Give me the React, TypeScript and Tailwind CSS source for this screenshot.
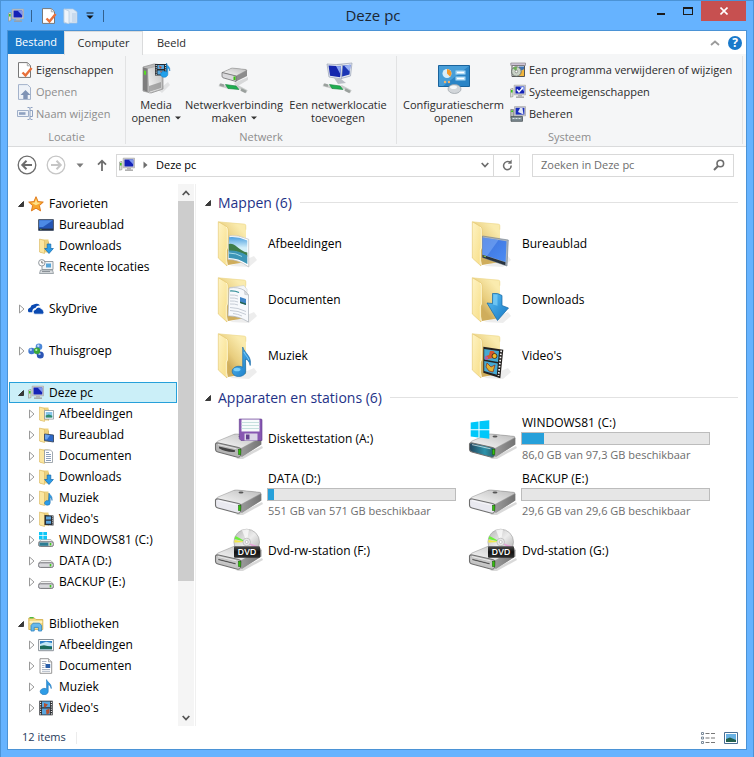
import type { ReactNode } from 'react';
import { clsx } from 'clsx';

/* ---------- 16px icons ---------- */

interface IconProps {
  name: string;
  className?: string;
}

const FolderBase = () => (
  <>
    <path d="M2 1.5h8.5v13H2z" fill="#ecd07c" />
    <path d="M10.5 3.5v11" stroke="#c9a54c" strokeWidth=".7" />
    <path d="M1.500 1l5 1.500v13l-5-1.500z" fill="#fbe6a0" stroke="#d9b65a" strokeWidth=".6" />
  </>
);

const Monitor = () => (
  <>
    <path d="M.5 5l2.500-.6v8.200l-2.500.6z" fill="#d9dcd6" stroke="#8b8f88" strokeWidth=".6" />
    <path d="M1 6h1.600v2.400H1z" fill="#3fc41e" />
    <path d="M4.200 1.200h11.400v9.600H4.200z" fill="#d5d5d5" stroke="#a5a5a5" strokeWidth=".7" />
    <path d="M5.500 2.500h8.800v7H5.500z" fill="#1423b8" />
    <path d="M9.500 2.500h4.800v5z" fill="#7f97ee" />
    <path d="M8 11h4v1.500H8z" fill="#b5b5b5" />
    <path d="M6 12.500h8v1.300H6z" fill="#9c9c9c" />
  </>
);

const SmallDrive = () => (
  <>
    <path d="M3.200 7.500h9.600l2.700 2.800H.5z" fill="#f0f0f0" stroke="#9c9c9c" strokeWidth=".7" />
    <rect x=".6" y="9.800" width="14.800" height="4.600" rx="1.600" fill="#d8d8dc" stroke="#77777c" />
    <path d="M11.700 11h1.600v2.400h-1.600z" fill="#3ecb1c" />
  </>
);

const smallIcons: Record<string, ReactNode> = {
  computer: <Monitor />,
  properties: (
    <>
      <path d="M1.500.6h9l3 3v11.800h-12z" fill="#fff" stroke="#777" />
      <path d="M10.300.8v3h3" fill="#eee" stroke="#999" strokeWidth=".8" />
      <path d="M5.500 10.500l3 3L14.600 6" fill="none" stroke="#e8703a" strokeWidth="2.400" />
    </>
  ),
  newFolder: (
    <>
      <path d="M1 1h9l4 3v11H1z" fill="#dce9f6" stroke="#b3c8de" strokeWidth=".7" />
      <path d="M1 1l5 2v13l-5-2z" fill="#eef4fb" stroke="#b3c8de" strokeWidth=".7" />
      <path d="M9 5h4v9H9z" fill="#c8daed" />
    </>
  ),
  open: (
    <>
      <path d="M1.500.6h9l3 3v11.800h-12z" fill="#eef2f8" stroke="#a3b2cb" />
      <path d="M8.500 6l5 5h-2.800v4H6.300v-4H3.500z" fill="#7f93b5" />
    </>
  ),
  rename: (
    <>
      <path d="M.5 4.500h11v6H.5z" fill="#eef2f8" stroke="#9fafc9" />
      <path d="M2 6.200h6.500v2.600H2z" fill="#8ea1c0" />
      <path d="M10.500 1.500h1.700l.8.8.8-.8h1.700M10.500 13.500h1.700l.8-.8.8.8h1.700M13 2v11M13 4.500h2.500v6H13" fill="none" stroke="#8ea1c0" />
    </>
  ),
  programs: (
    <>
      <path d="M2 3.500h12.500v11H2z" fill="#f5f5f5" stroke="#555" />
      <path d="M.8 1h14.700v2.400H.8z" fill="#d5c9dd" stroke="#777" strokeWidth=".6" />
      <path d="M9 4.500h5v4H9z" fill="#3f74b4" />
      <path d="M10 10l4-3v7H9z" fill="#f3b63c" />
      <circle cx="6.400" cy="9.500" r="4.800" fill="#c9d2c6" stroke="#58625a" strokeWidth=".8" />
      <path d="M6.400 9.500L3 6.200a4.700 4.700 0 014-1.300z" fill="#6cae57" />
      <circle cx="6.400" cy="9.500" r="1.300" fill="#fff" stroke="#555" strokeWidth=".5" />
    </>
  ),
  systemProps: (
    <>
      <Monitor />
      <path d="M7 5.500l2 2.400 4-4.500" fill="none" stroke="#fff" strokeWidth="1.500" />
    </>
  ),
  manage: (
    <>
      <path d="M4.500.6h11v9.200h-11z" fill="#d5d5d5" stroke="#999" strokeWidth=".6" />
      <path d="M5.600 1.800h8.800v6.800H5.600z" fill="#1a2fbd" />
      <path d="M8 6l2-4h2.500l1 6.600z" fill="#e2e7f5" />
      <path d="M.7 3.500h2.800v8H.7z" fill="#b9bdb8" stroke="#666" strokeWidth=".6" />
      <path d="M1.200 4.500h1.800v1.600H1.200z" fill="#3fc41e" />
      <path d="M1 10.500h11.500v4.800H1z" fill="#7d8b92" stroke="#4c555a" strokeWidth=".8" />
      <path d="M2.500 12.500h8.500" stroke="#dce3e6" strokeWidth="1" strokeDasharray="2 1" />
    </>
  ),
  star: (
    <>
      <path d="M8 .7l2.100 4.900 5.200.5-3.900 3.500 1.200 5.300L8 12.200l-4.600 2.700 1.200-5.300L.7 6.100l5.200-.5z" fill="#f7a52c" stroke="#dc7414" strokeWidth=".9" />
      <path d="M8 2.800l1.300 3.600 3.600.4-5 2.400-4.500-2.500 3.400-.3z" fill="#ffe28a" />
    </>
  ),
  desktop: (
    <>
      <path d="M.6 2.600h14.800v10.800H.6z" fill="#2456b5" stroke="#4b5566" />
      <path d="M1.200 3.200h13.600L5 10H1.200z" fill="#4c8ae4" />
      <path d="M1 11.600h14V13H1z" fill="#27313f" />
      <path d="M2 12h1.600v.6H2z" fill="#8ed24a" />
    </>
  ),
  downloads: (
    <>
      <FolderBase />
      <path d="M9.200 6h3.600v4.500h2.600L11 15.500l-4.400-5h2.600z" fill="#2c9ce8" stroke="#1268ac" strokeWidth=".7" />
    </>
  ),
  recent: (
    <>
      <path d="M4 2.500h11v8H4z" fill="#f1f3f5" stroke="#8c949b" strokeWidth=".9" />
      <path d="M8 4.500h5v4H8z" fill="#58a5d8" />
      <path d="M2.500 11h12l1 3.500H1.500z" fill="#d9dcdf" stroke="#8c949b" strokeWidth=".8" />
      <path d="M4 12.600h8" stroke="#6d757c" strokeWidth=".8" />
      <circle cx="3.800" cy="3.800" r="3.200" fill="#fbfbfb" stroke="#868d94" strokeWidth=".9" />
      <path d="M3.800 2v2h1.600" fill="none" stroke="#444" strokeWidth=".7" />
    </>
  ),
  skydrive: (
    <>
      <path d="M.8 11.300A2.900 2.900 0 012.400 6.400 3.600 3.600 0 015.800 3.600 4.200 4.200 0 0112 4.600C9.500 4.200 8 5.500 7.500 7c-2.300.2-3.600 2-3 4.300z" fill="#0a4ab2" />
      <path d="M6.800 13.200a2.500 2.500 0 01.8-4.800 3.100 3.100 0 015.600-.7 2.400 2.400 0 012.200 2.600c.5.4.7 1 .5 1.700a1.700 1.700 0 01-1.600 1.200z" fill="#0a4ab2" stroke="#fff" strokeWidth=".8" />
    </>
  ),
  homegroup: (
    <>
      <path d="M4 8l7-4v8z" fill="none" stroke="#9fb8d8" strokeWidth="1.600" />
      <circle cx="3.600" cy="8" r="3.300" fill="#3f78cf" />
      <circle cx="2.800" cy="6.800" r="1.200" fill="#b5d2f5" />
      <circle cx="11" cy="3.800" r="3.300" fill="#4c88d8" />
      <circle cx="10.300" cy="2.800" r="1.200" fill="#c5dcf8" />
      <circle cx="12.300" cy="12" r="3.500" fill="#2b55b5" />
      <circle cx="11.500" cy="10.900" r="1.200" fill="#a5c0ee" />
      <circle cx="9" cy="7.800" r="3.200" fill="#3aa83a" />
      <circle cx="8.300" cy="6.900" r="1.100" fill="#c0eeb5" />
    </>
  ),
  folderPictures: (
    <>
      <FolderBase />
      <path d="M6.500 4.500h9v8.600h-9z" fill="#fff" stroke="#8b949c" strokeWidth=".8" />
      <path d="M7.700 6h6.600v5.600H7.700z" fill="#86c5ea" />
      <path d="M7.700 9.400l3-1 3.600 1.400v1.800H7.700z" fill="#2f8a6a" />
    </>
  ),
  folderDesktop: (
    <>
      <FolderBase />
      <path d="M6.500 7l9 1v7l-9-1.400z" fill="#2c68c8" stroke="#394a63" strokeWidth=".9" />
      <path d="M7 7.600l5 .6-3 4.400-2-.3z" fill="#68a2ee" />
    </>
  ),
  folderDocuments: (
    <>
      <FolderBase />
      <path d="M6.500 2h6l2 2v10.500h-8z" fill="#fff" stroke="#8b949c" strokeWidth=".8" />
      <path d="M8 4.500h3M8 6.500h5M8 8.500h5M8 10.500h5M8 12.500h5" stroke="#6f87a8" strokeWidth=".8" />
    </>
  ),
  folderMusic: (
    <>
      <FolderBase />
      <path d="M11 3c.5 2 3.800 2.500 3 7.500-.2-2-1-3-1.800-3.200V13a2.800 2.300 0 11-1.700-2.200z" fill="#2c9ce8" stroke="#1268ac" strokeWidth=".5" />
    </>
  ),
  folderVideos: (
    <>
      <FolderBase />
      <path d="M6.500 4l9 .5v10l-9-.5z" fill="#2a2f36" />
      <path d="M8 5.500h5v3H8zM8 9.800h5v3H8z" fill="#5ba4dc" />
      <path d="M14.500 5.300v8.400" stroke="#e4e4e4" strokeWidth=".9" strokeDasharray="1 1" />
    </>
  ),
  driveWindows: (
    <>
      <SmallDrive />
      <path d="M1.400 10.600h9v3.200h-9z" fill="#2c7d93" />
      <path d="M1 0h3.600v3.300H1zM5.300 0H9v3.300H5.300zM1 4h3.600v3.600H1zM5.300 4H9v3.600H5.300z" fill="#0cc6f7" />
    </>
  ),
  drive: <SmallDrive />,
  libraries: (
    <>
      <path d="M.8 2h5.600l1.400 1.500h7v10H.8z" fill="#f6dc84" stroke="#d0a944" strokeWidth=".8" />
      <path d="M1.600 1h4v1.400h-4z" fill="#4dba3f" />
      <path d="M1.600 5h12.600v2H1.600z" fill="#fdf0bd" />
      <path d="M3 15V9.500L5 7.200h6.500L13.600 9.500V15h-3.200v-3.600H6.200V15z" fill="#67b9ec" stroke="#2e84c0" strokeWidth=".8" />
    </>
  ),
  pictures: (
    <>
      <path d="M.6 2.500h14.800v11.200H.6z" fill="#fff" stroke="#7d868d" strokeWidth=".9" />
      <path d="M2 4h12v8.300H2z" fill="#2c7fc6" />
      <path d="M2 7l6-2.300 6 1.300v3L2 9.500z" fill="#c2e7f5" />
      <path d="M2 9l4-.8 8 1.800v2.300H2z" fill="#1b6b58" />
    </>
  ),
  documents: (
    <>
      <path d="M2 .7h8.500l3.200 3.200v11.400H2z" fill="#fff" stroke="#8b8b8b" strokeWidth=".9" />
      <path d="M10.500.7v3.200h3.200" fill="#e5e5e5" stroke="#8b8b8b" strokeWidth=".7" />
      <path d="M4 3.500h4.500M4 5.500h4M4 7.500h2.500M4 9.500h2.500M4 11.500h8M4 13.300h8" stroke="#97a3b5" strokeWidth=".8" />
      <path d="M7.500 6h4.700v4H7.500z" fill="#2a5ea9" />
    </>
  ),
  music: (
    <path d="M8.600.6c.6 3 5.200 3.500 4.600 9-.5-2.600-1.600-3.600-3-4v7a4 3.200 0 11-1.600-2.600z" fill="#2e9ce6" stroke="#1b72b8" strokeWidth=".6" />
  ),
  videos: (
    <>
      <path d="M1.300.7h13.400v14.600H1.300z" fill="#2c2f33" />
      <path d="M4 1.600h8v5.600H4zM4 8.600h8v5.800H4z" fill="#5aa7df" />
      <path d="M6 3l4 1.400-2.500 2.800H6zM8 10l3.500-1.400v4.600l-3 1.200z" fill="#b5502f" />
      <path d="M2.600 1.800v12.600M13.400 1.800v12.600" stroke="#eee" strokeWidth="1.100" strokeDasharray="1.100 1.200" />
    </>
  ),
};

const Icon = ({ name, className }: IconProps) => (
  <svg viewBox="0 0 16 16" className={clsx('size-4 shrink-0', className)} aria-hidden="true">
    {smallIcons[name]}
  </svg>
);

/* ---------- 48px icons ---------- */

const LargeFolder = () => (
  <>
    <path d="M14 46l24-10 3 4-8 7z" fill="#000" opacity=".07" />
    <path d="M2.300 1.700L28.500 4q1.500 0 1.500 1.500V42l-18 3z" fill="url(#folderBack)" />
    <path d="M3 1.900L28.500 4.200q1.300.2 1.300 1.500v4" fill="none" stroke="#eeda92" strokeWidth=".7" />
    <path d="M2.300 1.700L10.500 6.500Q12 7.500 12 9.500V28l-1 2v16L2.300 38z" fill="url(#folderFlap)" stroke="#e3c469" strokeWidth=".6" />
    <path d="M10 7q1.300 1 1.300 2.800V28l-1 2v14.500" fill="none" stroke="#fffadf" strokeWidth=".8" />
  </>
);

const LargeDrive = ({ front = '#e9e9f0' }: { front?: string }) => (
  <>
    <path d="M20 44l26-13 1 2-20 11z" fill="#000" opacity=".15" />
    <path d="M17.500 19.500Q19 18.800 21 19l22.500 2.300q2 .3 2 2v6.200L25.500 42z" fill="#9a9a9a" />
    <path d="M0 28.500Q0 27 2 26l15.500-6.500q1.500-.6 3.500-.5l22.500 2.300q2 .4 1 1.500L26 33q-1.500.8-3.500.5z" fill="url(#driveTop)" stroke="#8f8f8f" strokeWidth=".5" />
    <path d="M26 33.500l19-10.500v6.500L25.500 42z" fill="url(#driveSide)" />
    <path d="M-.5 29q.5-1.500 3-1l20 4.500q2.500.5 2.500 2.500l-.5 5.500q-.5 2.200-3 1.700L2 37Q-.5 36.500-.5 34z" fill={front} stroke="#6f6f6f" strokeWidth="1.100" />
    <path d="M2 29.600l18.500 4.200" stroke="#fff" strokeWidth=".8" opacity=".8" />
    <rect x="22.400" y="34.200" width="2.400" height="5.400" fill="#35c20d" stroke="#195c0a" strokeWidth=".5" />
    <ellipse cx="25" cy="21.500" rx="2.500" ry=".9" fill="#555" />
  </>
);

const DvdDrive = () => (
  <>
    <LargeDrive front="#c4c4c4" />
    <path d="M2 31.500l18 4.500v1.800L2 33.300z" fill="#444" stroke="#eee" strokeWidth=".5" />
    <circle cx="30.700" cy="15" r="12.800" fill="url(#disc)" stroke="#9d9d9d" strokeWidth=".6" />
    <path d="M30.700 15L18.500 12l1-3z" fill="#6df03a" />
    <path d="M30.700 15L18.300 15.500l.2-2.500z" fill="#f2ea47" />
    <path d="M30.700 15l11.500 4.500-2 3z" fill="#e995d8" opacity=".8" />
    <path d="M30.700 15L26 3.200a12.500 12.500 0 017-.7z" fill="#fff" opacity=".7" />
    <circle cx="30.700" cy="15" r="3.800" fill="#e8e8e8" stroke="#aaa" strokeWidth=".6" />
    <circle cx="30.700" cy="15" r="1.500" fill="#fff" stroke="#999" strokeWidth=".5" />
    <rect x="18" y="19.300" width="26" height="11.400" rx="1" fill="url(#dvdLabel)" />
    <text x="31" y="28.300" textAnchor="middle" fontSize="9" fill="#fff" fontFamily="Open Sans" fontWeight="600">DVD</text>
  </>
);

const largeIcons: Record<string, ReactNode> = {
  pictures: (
    <>
      <LargeFolder />
      <path d="M13.300 15.700q9-1 19.400 3.600V47Q22 39 12 39.500z" fill="#fff" stroke="#b8bcc0" strokeWidth=".7" />
      <path d="M13 17.200q9-.8 18.300 3.300V44Q22 37.500 12.500 37.700z" fill="url(#sky)" />
      <path d="M12.800 24q3.500-1 6.500 1.500t6 4.500 6 2.500v4q-9-6-18.500-5.500z" fill="#3f7d49" />
      <path d="M12.800 30.500q9-.5 18.500 5V44q-9-6-18.500-6z" fill="#3c95b6" />
      <path d="M13 33q7 0 13 3.500" fill="none" stroke="#a5d9e8" strokeWidth="1" />
    </>
  ),
  documents: (
    <>
      <LargeFolder />
      <path d="M14 11.500l14-2 3 4v28l-18-4z" fill="#f4f6f8" stroke="#c0c4c8" strokeWidth=".5" />
      <path d="M13 12q9-1.500 15.500 2.500l4 4.500V46Q22 39.500 12 40z" fill="#f7f9fc" stroke="#abb0b7" strokeWidth=".7" />
      <path d="M28.500 14.500l.3 4 3.700.5z" fill="#d9dde2" stroke="#abb0b7" strokeWidth=".4" />
      <path d="M14 15q5-.3 9 1.500" fill="none" stroke="#2e8c96" strokeWidth="1.200" />
      <path d="M14 19q5-.3 8 1M14 22q5-.3 8 1M14 25q5-.3 8 1M14 28q5-.3 8 1M14 31.500q8 0 16 4M14 34.500q8 0 16 4M17 37.500q5 .5 9 2.500" fill="none" stroke="#c0c6d0" strokeWidth=".9" />
      <path d="M24 21l6 2v6l-6-2z" fill="#3f84c6" />
      <path d="M24 25.500l6 2V29l-6-2z" fill="#26654f" />
    </>
  ),
  music: (
    <>
      <LargeFolder />
      <path d="M26.700 15c1.500 6 9.500 9 7.500 18.500-.8-4-2.600-6-4.700-6.500l.2 12c.4 3.500-3.700 5.500-7.200 5.500s-6.500-2.500-6.300-5.500 4-5 7-4.700 2.800.8 3.500 1z" fill="url(#blueNote)" stroke="#1c6eaa" strokeWidth=".7" />
      <ellipse cx="21" cy="37.500" rx="3.500" ry="1.800" fill="#7fd1fa" />
      <path d="M28 20c1 3 4 5 4.800 8" fill="none" stroke="#8bd5fb" strokeWidth=".8" />
    </>
  ),
  desktop: (
    <>
      <LargeFolder />
      <path d="M12.500 16l25.800 4L37 46l-24.500-8.500z" fill="#aab4bf" stroke="#6f7a86" strokeWidth=".6" />
      <path d="M12.500 17.500L36.500 21.300 35.600 42 12.500 34.500z" fill="url(#screen)" />
      <path d="M12.500 17.500l16 2.500L17 36l-4.500-1.500z" fill="#8bb8fa" opacity=".45" />
      <path d="M12.500 34.800l23 7.400-.2 3L12.500 37.500z" fill="#28333f" />
      <path d="M13.500 36l2.500.8" stroke="#8fd34a" strokeWidth="1" />
    </>
  ),
  downloads: (
    <>
      <LargeFolder />
      <path d="M22.500 17.500q5-1 9.500 2v10l6.500 2.500-11 12.500L17 27l5.500.5z" fill="url(#blueNote)" stroke="#1667a3" strokeWidth=".7" />
      <path d="M23.500 18.500q2-.3 4 .2v11L23 28.500z" fill="#7fd1fa" opacity=".7" />
    </>
  ),
  videos: (
    <>
      <LargeFolder />
      <path d="M13.300 14.700l20 3-3 28.500-17-5.500z" fill="#24211f" />
      <path d="M14.200 17l14.800 2-1 11-13.800-2.500zM14.200 29l13.600 2.500-1 11.200L14.200 39z" fill="#45a9d3" />
      <path d="M20 19q4-1 5 2t-2 5l-5 1-2-3 3-1z" fill="#d7572e" />
      <circle cx="24.500" cy="24" r="2.500" fill="#f2ba26" stroke="#30231d" strokeWidth=".8" />
      <path d="M15 24l3 1v3l-3-.5z" fill="#b35ba5" />
      <path d="M17 31l4 4 4-2-2 7-4-1-3-4z" fill="#e0b332" stroke="#8b3a25" strokeWidth=".8" />
      <path d="M31.200 18.500L28.500 44" stroke="#f5f5f5" strokeWidth="1.700" strokeDasharray="1.600 1.500" />
    </>
  ),
  floppy: (
    <>
      <LargeDrive front="#b5b5b5" />
      <path d="M3 31.500l16 3.800v1.500q-8 1-16-3.600z" fill="#444" />
      <path d="M23.300 4H45q1 0 1 1v20.500H25l-1.700-1.700z" fill="#8757b2" stroke="#60378b" strokeWidth=".6" />
      <path d="M25.500 4.500h18v12h-18z" fill="#f7fbfb" />
      <path d="M25.500 7.500h18M25.500 10.500h18M25.500 13.500h18" stroke="#b9d9d7" strokeWidth=".8" />
      <path d="M28.500 18.500h13v7h-13z" fill="#dcd7e8" />
      <path d="M30 19.500h3.500v5H30z" fill="#62408e" />
    </>
  ),
  windows: (
    <>
      <LargeDrive front="url(#teal)" />
      <path d="M.7 7.500l7.800-1v7.700H.7zM9.500 6.300l9.800-1.100v9H9.500zM.7 15.200h7.800v7.200l-7.800-1zM9.500 15.200h9.800v8.500l-9.800-1.200z" fill="#00c8fa" />
    </>
  ),
  drive: <LargeDrive />,
  dvd: <DvdDrive />,
};

// Gradients shared by all of the large icons
const IconDefs = () => (
  <svg className="absolute size-0" aria-hidden="true">
    <defs>
      <linearGradient id="folderBack" gradientUnits="userSpaceOnUse" x1="10" y1="30" x2="29" y2="14">
        <stop offset="0" stopColor="#cfad5c" />
        <stop offset=".35" stopColor="#e8cd7e" />
        <stop offset="1" stopColor="#faebae" />
      </linearGradient>
      <linearGradient id="folderFlap" x1="0" y1="0" x2="1" y2="1">
        <stop offset="0" stopColor="#fef3c4" />
        <stop offset="1" stopColor="#f7dd84" />
      </linearGradient>
      <linearGradient id="sky" x1="0" y1="0" x2="0" y2="1">
        <stop offset="0" stopColor="#4c9fdf" />
        <stop offset=".4" stopColor="#d3effa" />
        <stop offset="1" stopColor="#d3effa" />
      </linearGradient>
      <linearGradient id="driveTop" x1="0" y1="1" x2="1" y2="0">
        <stop offset="0" stopColor="#fafafa" />
        <stop offset="1" stopColor="#bdbdbd" />
      </linearGradient>
      <linearGradient id="driveSide" x1="0" y1="0" x2="1" y2="0">
        <stop offset="0" stopColor="#9a9a9a" />
        <stop offset="1" stopColor="#747474" />
      </linearGradient>
      <linearGradient id="teal" x1="0" y1="0" x2="1" y2="0">
        <stop offset="0" stopColor="#23445c" />
        <stop offset=".6" stopColor="#2c93ab" />
        <stop offset="1" stopColor="#2b5a63" />
      </linearGradient>
      <linearGradient id="blueNote" x1="0" y1="0" x2="1" y2="1">
        <stop offset="0" stopColor="#5cc0f5" />
        <stop offset="1" stopColor="#1577c4" />
      </linearGradient>
      <linearGradient id="screen" x1="0" y1="0" x2="1" y2="1">
        <stop offset="0" stopColor="#3c70d8" />
        <stop offset="1" stopColor="#4c8df5" />
      </linearGradient>
      <linearGradient id="disc" x1="0" y1="0" x2="1" y2="1">
        <stop offset="0" stopColor="#b5b5b5" />
        <stop offset=".5" stopColor="#ececec" />
        <stop offset="1" stopColor="#a5a5a5" />
      </linearGradient>
      <linearGradient id="dvdLabel" x1="0" y1="0" x2="0" y2="1">
        <stop offset="0" stopColor="#4a4a4a" />
        <stop offset=".5" stopColor="#111" />
        <stop offset="1" stopColor="#2e2e2e" />
      </linearGradient>
    </defs>
  </svg>
);

const LargeIcon = ({ name }: { name: string }) => (
  <svg viewBox="0 0 48 48" className="size-12 shrink-0 overflow-visible" aria-hidden="true">
    {largeIcons[name]}
  </svg>
);

/* ---------- 32px ribbon icons ---------- */

const NetworkCable = () => (
  <>
    <path d="M1 23l9 2.500 10-1 9 5" fill="none" stroke="#c9cccb" strokeWidth="2.600" />
    <path d="M2 22.500l4 1.200M23 27.500l5 2.500" stroke="#9aa09d" strokeWidth="2.600" />
    <path d="M7.500 22.500L18 24l3 3.500-11-1z" fill="#1fae50" stroke="#12813a" strokeWidth=".6" />
  </>
);

const ribbonIcons: Record<string, ReactNode> = {
  media: (
    <>
      <path d="M18 28l10-8 2 3-8 8z" fill="#000" opacity=".08" />
      <path d="M3 5l11-3 9 1v24l-12 4-8-2z" fill="#b9b9b9" stroke="#8d8d8d" strokeWidth=".7" />
      <path d="M7.500 6.500L22 3v24l-13 4z" fill="url(#driveTop)" stroke="#999" strokeWidth=".5" />
      <path d="M3 5.500l4.500 1V30L3 28z" fill="#7d7d7d" />
      <path d="M9 24l12-4v6L9 30z" fill="#8b8b8b" opacity=".7" />
      <path d="M4 8.500l2 .5v4l-2-.5z" fill="#58d626" />
      <path d="M15 2h12v11.500H15z" fill="#24292e" />
      <path d="M17.500 3h6.500v4h-6.500zM17.500 8.500h6.500v4h-6.500z" fill="#55a7de" />
      <path d="M19 3.500l3 1.500-2 2zM20 9l3 1-1 2.500z" fill="#c1502f" />
      <path d="M16.200 3v10M25.700 3v10" stroke="#fff" strokeDasharray="1 1.200" />
      <path d="M26.500 1c.5 3 4 3.500 3.300 8-.5-2-1-2.800-2-3v6.500a3.600 3 0 11-1.300-2.500z" fill="#21a1ec" stroke="#1577bb" strokeWidth=".5" />
    </>
  ),
  networkDrive: (
    <>
      <path d="M16 21l14-6v3l-12 7z" fill="#000" opacity=".12" />
      <path d="M4 10.500L14 6l14 1.500q2 .5 1 1.500v5L18 19.500 5 15.500q-1-.6-1-2z" fill="#8c8c8c" />
      <path d="M4 10.500L14 6l14 1.500q1 .3 0 1.200L18 14z" fill="url(#driveTop)" stroke="#8f8f8f" strokeWidth=".5" />
      <path d="M4 10.500L18 14v5.500L5 15.800q-1-.6-1-1.800z" fill="#d9d9dc" stroke="#666" strokeWidth=".7" />
      <path d="M15.500 14.500h2v3.500h-2z" fill="#35c20d" />
      <NetworkCable />
    </>
  ),
  networkLocation: (
    <>
      <path d="M15 2.500l15-1.500-1.500 13-11 3z" fill="#e4e8f0" stroke="#97a0b4" strokeWidth=".7" />
      <path d="M17 4l11.500-1.300L27.500 12.500l-9 2.500z" fill="#1b36b5" />
      <path d="M22 3.500l6.500-.8-.8 7z" fill="#9ab1f2" />
      <path d="M5 2l15.500 1-1 14L7 15z" fill="#e4e8f0" stroke="#97a0b4" strokeWidth=".7" />
      <path d="M6.500 3.500l12.500.8-.8 11L8 13.700z" fill="#1426ad" />
      <path d="M14 4l5 .3-.6 8z" fill="#8ba4f2" />
      <path d="M12 16l7 1 5 4-8 1z" fill="#b9bdc5" />
      <NetworkCable />
    </>
  ),
  config: (
    <>
      <path d="M.5 3.500h31v21H.5z" fill="#2a84c6" stroke="#1a639c" />
      <path d="M1 4h30L5 24H1z" fill="#55a9e0" opacity=".7" />
      <circle cx="9" cy="11.500" r="4.500" fill="#d9edf9" />
      <path d="M9 11.500V7a4.500 4.500 0 013.200 7.700z" fill="#f59a2d" />
      <path d="M17.500 8.500h10v4h-10zM17.500 14.500h10v4h-10z" fill="#a7d7f3" />
      <path d="M19 10.500h7M19 16.500h7" stroke="#fff" strokeWidth="1.500" />
      <circle cx="7" cy="20" r="1.200" fill="#f5b56a" />
      <circle cx="11" cy="20" r="1.200" fill="#f5b56a" />
      <ellipse cx="16.500" cy="27" rx="6.500" ry="4.500" fill="#d2d6da" stroke="#9aa0a6" strokeWidth=".7" />
      <ellipse cx="15.500" cy="25.200" rx="3.500" ry="1.800" fill="#f5f7f8" />
    </>
  ),
};

/* ---------- Ribbon ---------- */

const Caret = () => (
  <svg viewBox="0 0 6 4" className="inline-block w-1.5 h-1 ml-1 mb-0.5" aria-hidden="true">
    <path d="M0 .5h6l-3 3z" fill="#333" />
  </svg>
);

interface BigButtonProps {
  icon: string;
  lines: [string, string];
  menu?: boolean;
}

const BigButton = ({ icon, lines, menu }: BigButtonProps) => (
  <button className="flex flex-col items-center text-[#2b2b2b] leading-[13px] whitespace-nowrap">
    <svg viewBox="0 0 32 32" className="size-8 mb-1" aria-hidden="true">
      {ribbonIcons[icon]}
    </svg>
    <span>{lines[0]}</span>
    <span>
      {lines[1]}
      {menu && <Caret />}
    </span>
  </button>
);

interface SmallButtonProps {
  icon: string;
  label: string;
  disabled?: boolean;
}

const SmallButton = ({ icon, label, disabled }: SmallButtonProps) => (
  <button
    disabled={disabled}
    className={clsx('flex items-center gap-[3px] h-[22px] whitespace-nowrap', disabled ? 'text-[#8d8d8d]' : 'text-[#2b2b2b]')}
  >
    <Icon name={icon} />
    {label}
  </button>
);

interface GroupProps {
  label: string;
  className?: string;
  children: ReactNode;
}

const RibbonGroup = ({ label, className, children }: GroupProps) => (
  <section className={clsx('flex flex-col justify-between border-r border-[#e2e3e4] my-0.5', className)}>
    <div className="flex">{children}</div>
    <div className="text-center text-[#8d8d8d] leading-[14px]">{label}</div>
  </section>
);

const Ribbon = () => (
  <div className="flex h-[93px] bg-[#f5f6f7] border-b border-[#dadbdc] text-[11px]">
    <RibbonGroup label="Locatie" className="w-[118px] shrink-0">
      <div className="pt-[3px] pl-[9px]">
        <SmallButton icon="properties" label="Eigenschappen" />
        <SmallButton icon="open" label="Openen" disabled />
        <SmallButton icon="rename" label="Naam wijzigen" disabled />
      </div>
    </RibbonGroup>
    <RibbonGroup label="Netwerk" className="w-[271px] shrink-0">
      <div className="grid grid-cols-[60px_96px_112px] pt-1.5">
        <BigButton icon="media" lines={['Media', 'openen']} menu />
        <BigButton icon="networkDrive" lines={['Netwerkverbinding', 'maken']} menu />
        <BigButton icon="networkLocation" lines={['Een netwerklocatie', 'toevoegen']} />
      </div>
    </RibbonGroup>
    <RibbonGroup label="Systeem" className="grow mr-[3px]">
      <div className="w-[113px] shrink-0 flex justify-center pt-1.5">
        <BigButton icon="config" lines={['Configuratiescherm', 'openen']} />
      </div>
      <div className="pt-[3px]">
        <SmallButton icon="programs" label="Een programma verwijderen of wijzigen" />
        <SmallButton icon="systemProps" label="Systeemeigenschappen" />
        <SmallButton icon="manage" label="Beheren" />
      </div>
    </RibbonGroup>
  </div>
);

/* ---------- Window chrome ---------- */

const TitleBar = () => (
  <header className="relative flex justify-between h-[29px] px-px">
    <div className="flex items-center">
      <Icon name="computer" />
      <span className="w-px h-3 ml-[7px] bg-[#33618f]" />
      <button className="ml-[9px]" aria-label="Eigenschappen">
        <Icon name="properties" className="block" />
      </button>
      <button className="ml-1.5" aria-label="Nieuwe map">
        <Icon name="newFolder" className="block" />
      </button>
      <button className="ml-[7px]" aria-label="Werkbalk Snelle toegang aanpassen">
        <svg viewBox="0 0 8 8" className="block size-2" aria-hidden="true">
          <path d="M.5 1h7" stroke="#111" />
          <path d="M.5 3.500h7L4 7z" fill="#111" />
        </svg>
      </button>
      <span className="w-px h-3 ml-[9px] bg-[#33618f]" />
    </div>
    <h1 className="absolute inset-x-0 top-0.5 mx-auto w-16 -translate-x-1 text-center text-[15px] leading-6 text-[#1c2733]">Deze pc</h1>
    <div className="flex items-start">
      <button className="w-7 h-5 flex items-center justify-center" aria-label="Minimaliseren">
        <svg viewBox="0 0 10 10" className="size-2.5">
          <path d="M1 8h8" stroke="#1b1b1b" strokeWidth="2" />
        </svg>
      </button>
      <button className="w-[26px] h-5 flex items-center justify-center" aria-label="Maximaliseren">
        <svg viewBox="0 0 10 8" className="w-2.5 h-2">
          <path d="M0 0h10v8H0zM1 2v5h8V2z" fill="#1b1b1b" fillRule="evenodd" />
        </svg>
      </button>
      <button className="w-[45px] h-5 flex items-center justify-center bg-[#c75050]" aria-label="Sluiten">
        <svg viewBox="0 0 8 8" className="size-2">
          <path d="M.5.5l7 7M7.500.5l-7 7" stroke="#fff" strokeWidth="1.600" />
        </svg>
      </button>
    </div>
  </header>
);

const Tabs = () => (
  <nav className="flex h-6 -mb-px items-stretch text-[11px]">
    <button className="w-14 h-[23px] bg-[#1979ca] text-white">Bestand</button>
    <button className="w-[79px] relative bg-[#f5f6f7] border border-b-0 border-[#dadbdc] text-[#2b2b2b]">Computer</button>
    <button className="w-[57px] text-[#2b2b2b]">Beeld</button>
    <div className="flex items-center gap-2 ml-auto pr-1">
      <button aria-label="Lint minimaliseren">
        <svg viewBox="0 0 10 6" className="block w-2.5 h-1.5">
          <path d="M1 5l4-3.500L9 5" fill="none" stroke="#9b9b9b" strokeWidth="1.800" />
        </svg>
      </button>
      <button className="size-3.5 rounded-full bg-[#1979ca] text-white text-xs font-bold leading-[14px]" aria-label="Help">
        ?
      </button>
    </div>
  </nav>
);

const Arrow = ({ color }: { color: string }) => (
  <svg viewBox="0 0 20 20" className="block size-5">
    <circle cx="10" cy="10" r="8.800" fill="none" stroke={color} strokeWidth="1.300" />
    <path d="M5.500 10h9.500M9.500 5.800L5.300 10l4.200 4.200" fill="none" stroke={color} strokeWidth="2" />
  </svg>
);

const AddressBar = () => (
  <div className="flex items-center h-9 mb-px pl-[9px] pr-3">
    <button aria-label="Vorige">
      <Arrow color="#6d6d6d" />
    </button>
    <button disabled className="ml-[9px] rotate-180" aria-label="Volgende">
      <Arrow color="#c6c6c6" />
    </button>
    <button className="ml-2.5" aria-label="Recente locaties">
      <svg viewBox="0 0 8 5" className="block w-2 h-[5px]">
        <path d="M.5.5h7L4 4.500z" fill="#7a7a7a" />
      </svg>
    </button>
    <button className="ml-3" aria-label="Omhoog">
      <svg viewBox="0 0 12 12" className="block size-3">
        <path d="M6 12V2M2 5.700L6 1.700l4 4" fill="none" stroke="#6d6d6d" strokeWidth="1.800" />
      </svg>
    </button>
    <div className="flex items-stretch grow h-[23px] ml-2 border border-[#d9d9d9] text-[11px]">
      <button className="flex items-center pl-0.5">
        <Icon name="computer" />
        <svg viewBox="0 0 5 8" className="w-[5px] h-2 ml-2 mr-2">
          <path d="M.5.5L4.500 4l-4 3.500z" fill="#6d6d6d" />
        </svg>
        Deze pc
      </button>
      <button className="ml-auto w-[17px] flex items-center justify-center" aria-label="Vorige locaties">
        <svg viewBox="0 0 8 6" className="w-2 h-1.5">
          <path d="M.7 1L4 4.500 7.300 1" fill="none" stroke="#6d6d6d" strokeWidth="1.700" />
        </svg>
      </button>
      <button className="w-[26px] border-l border-[#d9d9d9] flex items-center justify-center" aria-label="Vernieuwen">
        <svg viewBox="0 0 12 12" className="size-3">
          <path d="M9.300 3.300A4.200 4.200 0 106 10.800a4.300 4.300 0 004.200-4.300" fill="none" stroke="#6d6d6d" strokeWidth="1.500" />
          <path d="M6.800 4.700h3.900V.6z" fill="#6d6d6d" />
        </svg>
      </button>
    </div>
    <label className="flex items-center w-[202px] h-[23px] ml-3 pl-2 pr-2 border border-[#d9d9d9] text-[11px]">
      <span className="sr-only">Zoeken</span>
      <input type="text" placeholder="Zoeken in Deze pc" className="grow min-w-0 outline-none placeholder:text-[#6d6d6d]" />
      <svg viewBox="0 0 12 12" className="size-3" aria-hidden="true">
        <circle cx="7.300" cy="4.500" r="3.300" fill="none" stroke="#6d6d6d" strokeWidth="1.600" />
        <path d="M5 7L1 11" stroke="#6d6d6d" strokeWidth="2" />
      </svg>
    </label>
  </div>
);

/* ---------- Navigation pane ---------- */

interface TreeNode {
  icon: string;
  label: string;
  open?: boolean;
  selected?: boolean;
  leaf?: boolean;
  children?: TreeNode[];
}

const tree: TreeNode[] = [
  {
    icon: 'star',
    label: 'Favorieten',
    open: true,
    children: [
      { icon: 'desktop', label: 'Bureaublad', leaf: true },
      { icon: 'downloads', label: 'Downloads', leaf: true },
      { icon: 'recent', label: 'Recente locaties', leaf: true },
    ],
  },
  { icon: 'skydrive', label: 'SkyDrive' },
  { icon: 'homegroup', label: 'Thuisgroep' },
  {
    icon: 'computer',
    label: 'Deze pc',
    open: true,
    selected: true,
    children: [
      { icon: 'folderPictures', label: 'Afbeeldingen' },
      { icon: 'folderDesktop', label: 'Bureaublad' },
      { icon: 'folderDocuments', label: 'Documenten' },
      { icon: 'downloads', label: 'Downloads' },
      { icon: 'folderMusic', label: 'Muziek' },
      { icon: 'folderVideos', label: "Video's" },
      { icon: 'driveWindows', label: 'WINDOWS81 (C:)' },
      { icon: 'drive', label: 'DATA (D:)' },
      { icon: 'drive', label: 'BACKUP (E:)' },
    ],
  },
  {
    icon: 'libraries',
    label: 'Bibliotheken',
    open: true,
    children: [
      { icon: 'pictures', label: 'Afbeeldingen' },
      { icon: 'documents', label: 'Documenten' },
      { icon: 'music', label: 'Muziek' },
      { icon: 'videos', label: "Video's" },
    ],
  },
];

const Expander = ({ open }: { open?: boolean }) => (
  <svg viewBox="0 0 8 8" className="size-2 shrink-0 overflow-visible" aria-hidden="true">
    {open ? (
      <path d="M6.500 1.500v5h-5z" fill="#3b3b3b" stroke="#222" strokeWidth=".8" />
    ) : (
      <path d="M2.500 0L7 4 2.500 8z" fill="#fff" stroke="#9a9a9a" />
    )}
  </svg>
);

const TreeRow = ({ node, child }: { node: TreeNode; child?: boolean }) => (
  <button
    className={clsx(
      'flex items-center w-full h-[21px] border text-left whitespace-nowrap',
      child ? 'pl-[17px]' : 'pl-[7px]',
      node.selected ? 'bg-[#cbeff8] border-[#26a0da]' : 'border-transparent'
    )}
  >
    {node.leaf ? <span className="w-2" /> : <Expander open={node.open} />}
    <Icon name={node.icon} className="ml-[3px] mr-[5px]" />
    {node.label}
  </button>
);

const NavPane = () => (
  <aside className="flex w-[188px] shrink-0 border-r border-[#f0f0f0]">
    <ul className="grow flex flex-col gap-[21px] pt-[9px] pb-2 px-px">
      {tree.map((node) => (
        <li key={node.label}>
          <TreeRow node={node} />
          {node.children && (
            <ul>
              {node.children.map((c) => (
                <li key={c.label}>
                  <TreeRow node={c} child />
                </li>
              ))}
            </ul>
          )}
        </li>
      ))}
    </ul>
    <div className="flex flex-col w-4 mr-px bg-[#f5f5f5]">
      <button className="h-[17px] flex items-center justify-center" aria-label="Omhoog schuiven">
        <svg viewBox="0 0 8 6" className="w-2 h-1.5">
          <path d="M.7 5L4 1.500 7.300 5" fill="none" stroke="#555" strokeWidth="1.800" />
        </svg>
      </button>
      <div className="grow">
        <div className="h-[380px] bg-[#cdcdcd]" />
      </div>
      <button className="h-[17px] flex items-center justify-center" aria-label="Omlaag schuiven">
        <svg viewBox="0 0 8 6" className="w-2 h-1.5">
          <path d="M.7 1L4 4.500 7.300 1" fill="none" stroke="#555" strokeWidth="1.800" />
        </svg>
      </button>
    </div>
  </aside>
);

/* ---------- Content ---------- */

interface Item {
  icon: string;
  label: string;
  used?: number;
  info?: string;
}

const folders: Item[] = [
  { icon: 'pictures', label: 'Afbeeldingen' },
  { icon: 'desktop', label: 'Bureaublad' },
  { icon: 'documents', label: 'Documenten' },
  { icon: 'downloads', label: 'Downloads' },
  { icon: 'music', label: 'Muziek' },
  { icon: 'videos', label: "Video's" },
];

const devices: Item[] = [
  { icon: 'floppy', label: 'Diskettestation (A:)' },
  { icon: 'windows', label: 'WINDOWS81 (C:)', used: 12, info: '86,0 GB van 97,3 GB beschikbaar' },
  { icon: 'drive', label: 'DATA (D:)', used: 3, info: '551 GB van 571 GB beschikbaar' },
  { icon: 'drive', label: 'BACKUP (E:)', used: 0, info: '29,6 GB van 29,6 GB beschikbaar' },
  { icon: 'dvd', label: 'Dvd-rw-station (F:)' },
  { icon: 'dvd', label: 'Dvd-station (G:)' },
];

const ItemTile = ({ item }: { item: Item }) => (
  <button className="flex items-center gap-[3px] h-14 text-left whitespace-nowrap">
    <LargeIcon name={item.icon} />
    {item.info ? (
      <span className="flex flex-col w-[189px]">
        <span className="pl-px leading-4">{item.label}</span>
        <span className="flex h-[13px] mt-px mb-0.5 border border-[#bcbcbc] bg-[#e6e6e6]">
          <span className="bg-[#26a0da]" style={{ width: `${item.used}%` }} />
        </span>
        <span className="pl-px text-[11px] leading-4 text-[#6d6d6d]">{item.info}</span>
      </span>
    ) : (
      <span className="pl-px">{item.label}</span>
    )}
  </button>
);

const Section = ({ title, items }: { title: string; items: Item[] }) => (
  <section>
    <h2 className="flex items-center h-[27px] pr-2 text-sm text-[#1e3287] whitespace-nowrap">
      <Expander open />
      <span className="ml-1.5 mr-2">{title}</span>
      <span className="grow h-px bg-[#e2e2e2]" />
    </h2>
    <div className="grid grid-cols-[repeat(auto-fill,254px)] pl-3">
      {items.map((item) => (
        <ItemTile key={item.label} item={item} />
      ))}
    </div>
  </section>
);

const StatusBar = () => (
  <footer className="flex items-center h-[23px] pl-3.5 pr-1.5 text-[11px] text-[#1e395b]">
    <span>12 items</span>
    <span className="w-px h-3 ml-2.5 bg-[#ececec]" />
    <button className="ml-auto" aria-label="Details">
      <svg viewBox="0 0 16 14" className="block w-4 h-3.5">
        <path d="M1.500 1.500h2v2h-2zM1.500 6h2v2h-2zM1.500 10.500h2v2h-2z" fill="#fff" stroke="#7a8a9a" />
        <path d="M5.500 2.500h4M5.500 7h4M5.500 11.500h4M11 2.500h4M11 7h4M11 11.500h4" stroke="#777" />
      </svg>
    </button>
    <button className="ml-1.5 size-[18px] flex items-center justify-center" aria-label="Grote pictogrammen">
      <svg viewBox="0 0 14 12" className="w-3.5 h-3">
        <path d="M.5.5h13v11H.5z" fill="#fff" stroke="#4a6f95" />
        <path d="M2 2h10v8H2z" fill="#69b2e4" />
        <path d="M2 7l4-1.500L12 8v2H2z" fill="#23614e" />
      </svg>
    </button>
  </footer>
);

export default function App() {
  return (
    <div className="min-h-screen flex flex-col bg-[#66b3ff] border border-[#4b93d6] px-1.5 pb-[7px] font-['Open_Sans','Noto_Sans',sans-serif] text-xs text-black">
      <IconDefs />
      <TitleBar />
      <main className="grow flex flex-col bg-white border border-[#4b93d6]">
        <Tabs />
        <Ribbon />
        <AddressBar />
        <div className="grow flex">
          <NavPane />
          <div className="grow min-w-0 pt-[5px] pl-2">
            <Section title="Mappen (6)" items={folders} />
            <Section title="Apparaten en stations (6)" items={devices} />
          </div>
        </div>
        <StatusBar />
      </main>
    </div>
  );
}
